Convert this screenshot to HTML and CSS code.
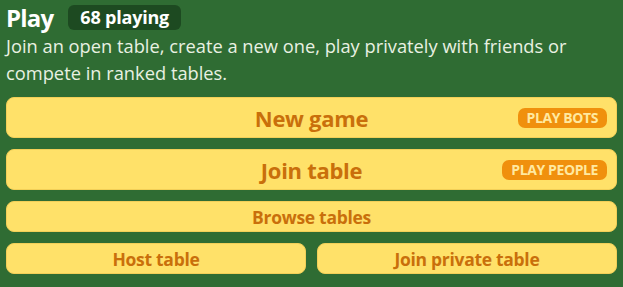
FILE: index.html
```html
<!DOCTYPE html>
<html lang="en">
<head>
<meta charset="utf-8">
<link rel="stylesheet" href="styles.css">
</head>
<body>
<div class="panel">
  <div class="header">
    <h1 class="title">Play</h1>
    <span class="count">68 playing</span>
  </div>
  <p class="desc">Join an open table, create a new one, play privately with friends or compete in ranked tables.</p>
  <div class="actions">
    <button class="btn btn-big">New game<span class="tag">PLAY BOTS</span></button>
    <button class="btn btn-big">Join table<span class="tag">PLAY PEOPLE</span></button>
    <button class="btn btn-small">Browse tables</button>
    <div class="row">
      <button class="btn btn-small">Host table</button>
      <button class="btn btn-small">Join private table</button>
    </div>
  </div>
</div>
</body>
</html>
```

FILE: styles.css
```css
html, body {
  margin: 0;
  padding: 0;
}
body {
  background: #2f6c33;
  font-family: "Open Sans", "Noto Sans", sans-serif;
  width: 623px;
  height: 287px;
  overflow: hidden;
}
.panel {
  padding: 5px 6px 0 6px;
}
.header {
  display: flex;
  align-items: center;
  height: 25px;
}
.title {
  margin: 0;
  font-size: 24px;
  font-weight: 700;
  color: #ffffff;
  line-height: 25px;
  letter-spacing: -0.8px;
}
.count {
  margin-left: 15px;
  height: 25px;
  padding: 0 12px;
  box-sizing: border-box;
  border-radius: 6px;
  background: #1d4a21;
  color: #ffffff;
  font-size: 18px;
  font-weight: 700;
  line-height: 25px;
  letter-spacing: -0.2px;
}
.desc {
  margin: 2px 0 0 0;
  font-size: 18.3px;
  line-height: 27px;
  color: #e9f1e2;
}
.actions {
  margin-top: 11px;
  display: flex;
  flex-direction: column;
  gap: 11px;
}
.row {
  display: grid;
  grid-template-columns: 1fr 1fr;
  gap: 11px;
}
.btn {
  position: relative;
  display: flex;
  align-items: center;
  justify-content: center;
  width: 100%;
  margin: 0;
  padding: 0;
  border: 1px solid #f2cf58;
  border-radius: 8px;
  background: #ffe169;
  color: #c96f0b;
  font-family: "Open Sans", "Noto Sans", sans-serif;
  font-weight: 700;
  letter-spacing: -0.3px;
}
.btn-big {
  height: 41px;
  font-size: 22px;
}
.btn-small {
  height: 31px;
  font-size: 17.5px;
}
.tag {
  position: absolute;
  right: 9px;
  top: 50%;
  transform: translateY(-50%);
  height: 20px;
  padding: 0 9px;
  border-radius: 7px;
  background: #f0900d;
  color: #ffe9a0;
  font-size: 14px;
  font-weight: 700;
  line-height: 20px;
  letter-spacing: -0.4px;
}
```
